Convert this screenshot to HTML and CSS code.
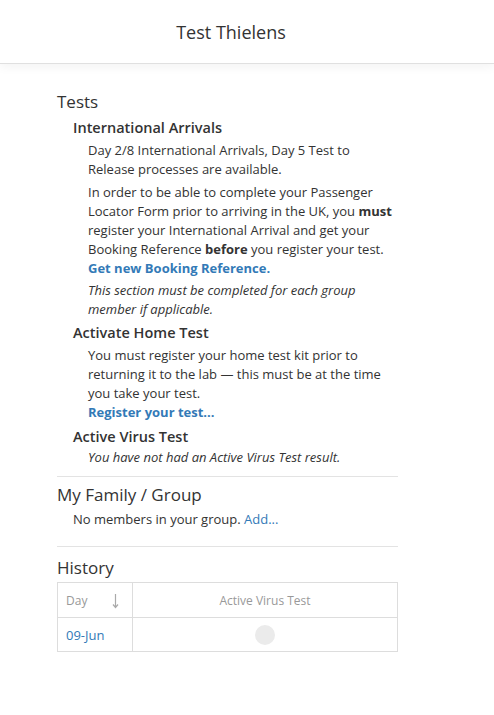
FILE: index.html
```
<!DOCTYPE html>
<html lang="en">
<head>
  <meta charset="UTF-8">
  <meta name="viewport" content="width=device-width, initial-scale=1.0">
  <title>Test Thielens</title>
  <link rel="stylesheet" href="styles.css">
</head>
<body>
  <header class="top-bar">
    <h1 class="top-title">Test Thielens</h1>
  </header>

  <main class="content">
    <section class="block">
      <h2>Tests</h2>

      <h3>International Arrivals</h3>
      <div class="item">
        <p>Day 2/8 International Arrivals, Day 5 Test to Release processes are available.</p>
        <p class="link-para">In order to be able to complete your Passenger Locator Form prior to arriving in the UK, you <b>must</b> register your International Arrival and get your Booking Reference <b>before</b> you register your test.<br>
          <a href="#" class="strong-link">Get new Booking Reference.</a></p>
        <p><i>This section must be completed for each group member if applicable.</i></p>
      </div>

      <h3>Activate Home Test</h3>
      <div class="item">
        <p>You must register your home test kit prior to returning it to the lab &mdash; this must be at the time you take your test.<br>
          <a href="#" class="strong-link">Register your test...</a></p>
      </div>

      <h3 class="tight">Active Virus Test</h3>
      <div class="item">
        <p><i>You have not had an Active Virus Test result.</i></p>
      </div>
    </section>

    <hr>

    <section class="block">
      <h2>My Family / Group</h2>
      <p class="note">No members in your group. <a href="#">Add...</a></p>
    </section>

    <hr class="wide-gap">

    <section class="block">
      <h2>History</h2>
      <table class="history">
        <thead>
          <tr>
            <th class="day-col">Day
              <svg class="sort" width="7" height="16" viewBox="0 0 7 16">
                <path d="M3.5 1v13M1 11.5l2.5 3 2.5-3" fill="none" stroke="#aaa" stroke-width="1.2"/>
              </svg>
            </th>
            <th>Active Virus Test</th>
          </tr>
        </thead>
        <tbody>
          <tr>
            <td class="day-col"><a href="#">09-Jun</a></td>
            <td class="result"><span class="dot"></span></td>
          </tr>
        </tbody>
      </table>
    </section>
  </main>
</body>
</html>
```

FILE: styles.css
```
body {
  margin: 0;
  font-family: "Open Sans", "Noto Sans", Arial, sans-serif;
  font-size: 13px;
  color: #333;
  background: #fff;
}
a {
  color: #337ab7;
  text-decoration: none;
}
.top-bar {
  height: 63px;
  border-bottom: 1px solid #e0e0e0;
  box-shadow: 0 3px 10px rgba(0, 0, 0, 0.05);
  display: flex;
  align-items: center;
  justify-content: center;
  padding-right: 32px;
}
.top-title {
  margin: 0;
  font-size: 18px;
  font-weight: normal;
  color: #333;
}
.content {
  width: 341px;
  margin: 0 0 0 57px;
  padding-top: 26px;
}
h2 {
  margin: 0;
  font-size: 17px;
  line-height: 24px;
  font-weight: normal;
}
h3 {
  margin: 4px 0 3px 16px;
  font-size: 14.5px;
  line-height: 20px;
  font-weight: 600;
}
h3.tight {
  margin-top: 5px;
  margin-bottom: 1px;
}
.item {
  padding-left: 31px;
}
.item p {
  margin: 0 0 4px;
  line-height: 19px;
}
.item p.link-para {
  margin-bottom: 3px;
}
.item p:last-child {
  margin-bottom: 0;
}
.strong-link {
  font-weight: 700;
}
hr {
  border: 0;
  border-top: 1px solid #e3e3e3;
  margin: 9px 0 6px;
}
hr.wide-gap {
  margin: 17px 0 9px;
}
.note {
  margin: 3px 0 0 16px;
  line-height: 19px;
}
.history {
  width: 100%;
  margin-top: 2px;
  border-collapse: collapse;
  border: 1px solid #ddd;
}
.history th,
.history td {
  border: 1px solid #ddd;
  padding: 0 8px;
}
.history th {
  height: 34px;
  font-size: 12px;
  font-weight: normal;
  color: #999;
}
.history td {
  height: 33px;
}
.history .day-col {
  width: 58px;
  text-align: left;
}
.sort {
  float: right;
  margin: 1px 5px 0 0;
}
.result {
  text-align: center;
}
.dot {
  display: inline-block;
  width: 20px;
  height: 20px;
  border-radius: 50%;
  background: #ebebeb;
  vertical-align: middle;
}
```
